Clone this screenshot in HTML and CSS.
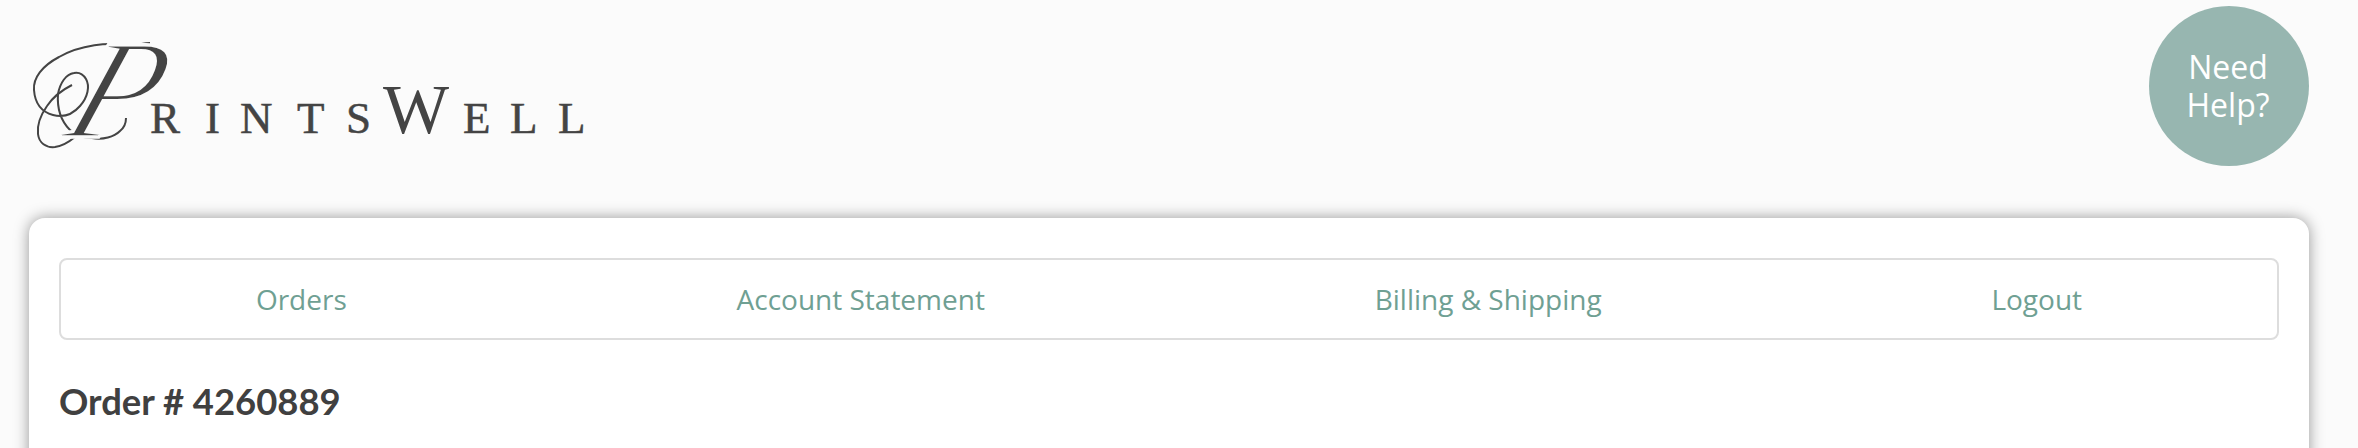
FILE: index.html

```html
<!DOCTYPE html>
<html lang="en">
<head>
    <meta charset="UTF-8">
    <meta name="viewport" content="width=device-width, initial-scale=1.0">
    <title>PrintsWell - Order # 4260889</title>
    <link rel="stylesheet" href="styles.css">
</head>
<body>
    <header class="top">
        <a class="logo" href="#" aria-label="PrintsWell">
            <svg class="logo-mark" width="560" height="120" viewBox="29 40 560 120">
                <g class="swash">
                    <path d="M150 43 C142 43 137 45 132 47 C110 40 78 46 59 57 C42 66 33 78 34 90 C35 104 42 112 53 115 C64 118 73 114 80 106 C88 97 90 86 86 79 C83 74 79 72 74 73 C66 74 60 83 58 94 C57 108 61 121 70 130 C76 136 83 138 92 138 C103 140 114 137 120 131 C125 127 126 122 126 118"/>
                    <path d="M72 85 C62 90 53 97 47 106 C40 116 37 126 38 134 C39 143 46 148 55 147 C62 146 69 142 75 137"/>
                </g>
                <text class="swash-p" transform="translate(60 137) skewX(-20)">P</text>
                <text class="logo-small" x="150 205 240 297 346" y="133">RINTS</text>
                <text class="logo-big" x="383" y="133">W</text>
                <text class="logo-small" x="463 510 558" y="133">ELL</text>
            </svg>
        </a>
        <a class="help" href="#">Need<br>Help?</a>
    </header>

    <main class="card">
        <nav class="tabs">
            <a href="#">Orders</a>
            <a href="#">Account Statement</a>
            <a href="#">Billing &amp; Shipping</a>
            <a href="#">Logout</a>
        </nav>
        <h1>Order # 4260889</h1>
    </main>
</body>
</html>
```

FILE: styles.css

```css
html {
    height: 448px;
    overflow: hidden;
}
body {
    margin: 0;
    background: #fbfbfb;
    font-family: "Open Sans", sans-serif;
    color: #404040;
}
a {
    text-decoration: none;
}
.top {
    display: flex;
    justify-content: space-between;
    align-items: flex-start;
    height: 218px;
    padding: 6px 49px 0 29px;
    box-sizing: border-box;
}
.logo {
    margin-top: 34px;
}
.logo-mark {
    display: block;
    overflow: visible;
}
.swash path {
    fill: none;
    stroke: #444;
    stroke-width: 2;
}
.swash-p {
    font-family: "Liberation Serif", serif;
    font-style: italic;
    font-size: 141px;
    fill: #444;
    stroke: #fbfbfb;
    stroke-width: 3.5px;
}
.logo-small {
    font-family: "Liberation Serif", serif;
    font-size: 45px;
    fill: #444;
    stroke: #444;
    stroke-width: 0.5px;
}
.logo-big {
    font-family: "Liberation Serif", serif;
    font-size: 70px;
    fill: #444;
}
.help {
    display: flex;
    align-items: center;
    justify-content: center;
    width: 158px;
    height: 160px;
    padding-right: 2px;
    border-radius: 50%;
    background: #97b6b0;
    color: #fff;
    font-size: 32px;
    line-height: 38px;
    text-align: center;
}
.card {
    margin: 0 49px 0 29px;
    min-height: 300px;
    padding: 40px 30px;
    background: #fff;
    border-radius: 16px;
    box-shadow: 0 0 15px rgba(0, 0, 0, 0.4);
}
.tabs {
    display: flex;
    justify-content: space-around;
    align-items: center;
    height: 82px;
    box-sizing: border-box;
    border: 2px solid #ddd;
    border-radius: 8px;
}
.tabs a {
    color: #6fa093;
    font-size: 28px;
}
h1 {
    margin: 39px 0 0;
    font-family: Lato, sans-serif;
    font-size: 36.4px;
    font-weight: 700;
    line-height: 44px;
    color: #404040;
}
```
